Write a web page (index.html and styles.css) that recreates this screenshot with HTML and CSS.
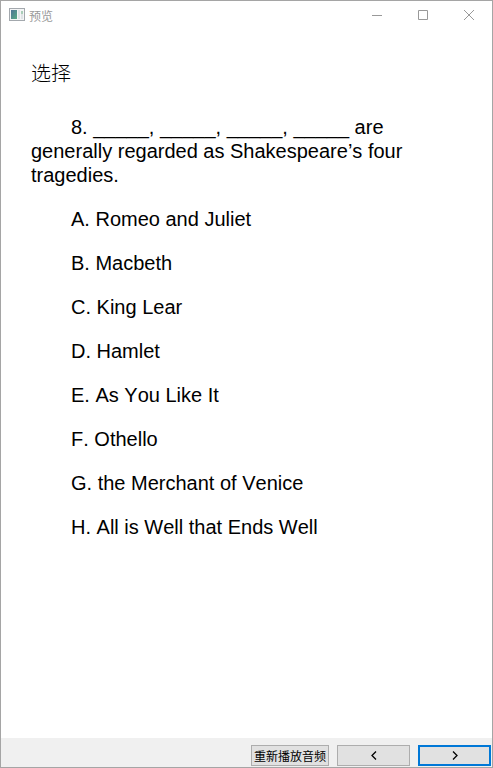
FILE: index.html
```
<!DOCTYPE html>
<html lang="zh-CN">
<head>
    <meta charset="UTF-8">
    <meta name="viewport" content="width=device-width, initial-scale=1.0">
    <title>预览</title>
    <link rel="stylesheet" href="styles.css">
</head>
<body>
    <div class="window">
        <!-- 标题栏 -->
        <header class="title_bar">
            <svg class="app_icon" width="16" height="14" viewBox="0 0 16 14">
                <defs>
                    <linearGradient id="pane" x1="0" y1="0" x2="1" y2="1">
                        <stop offset="0" stop-color="#4f7396"/>
                        <stop offset="1" stop-color="#58ab84"/>
                    </linearGradient>
                </defs>
                <rect x="0.5" y="0.5" width="15" height="12" fill="#f4f5f6" stroke="#a3a8ad"/>
                <rect x="2" y="2" width="6" height="9" fill="url(#pane)"/>
                <rect x="9" y="2" width="2" height="9" fill="#dfe3e6"/>
                <rect x="12" y="3" width="2" height="3" fill="#a9cdb8"/>
                <rect x="12" y="6" width="2" height="5" fill="#dfe3e6"/>
            </svg>
            <span class="title">预览</span>
            <button class="win_btn" aria-label="最小化">
                <svg width="10" height="10" viewBox="0 0 10 10"><path d="M0 5.5H10"/></svg>
            </button>
            <button class="win_btn" aria-label="最大化">
                <svg width="10" height="10" viewBox="0 0 10 10"><path d="M0.5 0.5H9.5V9.5H0.5Z"/></svg>
            </button>
            <button class="win_btn" aria-label="关闭">
                <svg width="10" height="10" viewBox="0 0 10 10"><path d="M0 0L10 10M10 0L0 10"/></svg>
            </button>
        </header>

        <!-- 题目 -->
        <main class="content">
            <h1 class="type">选择</h1>
            <p class="question">8. _____, _____, _____, _____ are generally regarded as Shakespeare’s four tragedies.</p>
            <p>A. Romeo and Juliet</p>
            <p>B. Macbeth</p>
            <p>C. King Lear</p>
            <p>D. Hamlet</p>
            <p>E. As You Like It</p>
            <p>F. Othello</p>
            <p>G. the Merchant of Venice</p>
            <p>H. All is Well that Ends Well</p>
        </main>

        <!-- 底部按钮 -->
        <footer class="tool_bar">
            <button class="btn replay">重新播放音频</button>
            <button class="btn" aria-label="上一题">
                <svg width="6" height="9" viewBox="0 0 6 9"><path d="M5 0.5L1 4.5L5 8.5"/></svg>
            </button>
            <button class="btn active" aria-label="下一题">
                <svg width="6" height="9" viewBox="0 0 6 9"><path d="M1 0.5L5 4.5L1 8.5"/></svg>
            </button>
        </footer>
    </div>
</body>
</html>
```
FILE: styles.css
```
*{
    box-sizing: border-box;
}
body{
    margin: 0;
}
.window{
    min-height: 100vh;
    border: 1px solid #a5a5a5;
    background-color: #fff;
    display: flex;
    flex-direction: column;
}
svg{
    display: block;
    fill: none;
    stroke-width: 1;
}

.title_bar{
    height: 28px;
    padding-left: 8px;
    display: flex;
    align-items: center;
}
.title{
    flex: 1;
    margin-left: 4px;
    font: 12px "Noto Sans CJK SC", sans-serif;
    color: #999;
}
.win_btn{
    width: 46px;
    height: 28px;
    padding: 0;
    border: none;
    background: none;
    stroke: #999;
    display: flex;
    align-items: center;
    justify-content: center;
}

.content{
    flex: 1;
    padding: 33px 70px 0 30px;
    font: 20px/24px "Liberation Sans", Arial, sans-serif;
    font-kerning: none;
    color: #000;
}
.type{
    margin: 0 0 29px;
    font: 20px/24px "Liberation Sans", "Noto Sans CJK SC", sans-serif;
    font-weight: 300;
}
.content p{
    margin: 0 0 20px;
    text-indent: 40px;
}

.tool_bar{
    height: 29px;
    padding: 7px 1px 1px 0;
    background-color: #f0f0f0;
    display: flex;
    justify-content: flex-end;
    gap: 8px;
}
.btn{
    width: 73px;
    height: 21px;
    padding: 0;
    border: 1px solid #adadad;
    background-color: #e1e1e1;
    font: 12px/19px "Noto Sans CJK SC", sans-serif;
    color: #000;
    stroke: #000;
    display: flex;
    align-items: center;
    justify-content: center;
}
.btn svg{
    stroke-width: 1.3;
}
.replay{
    width: 78px;
}
.active{
    border: 2px solid #0078d7;
}
```
